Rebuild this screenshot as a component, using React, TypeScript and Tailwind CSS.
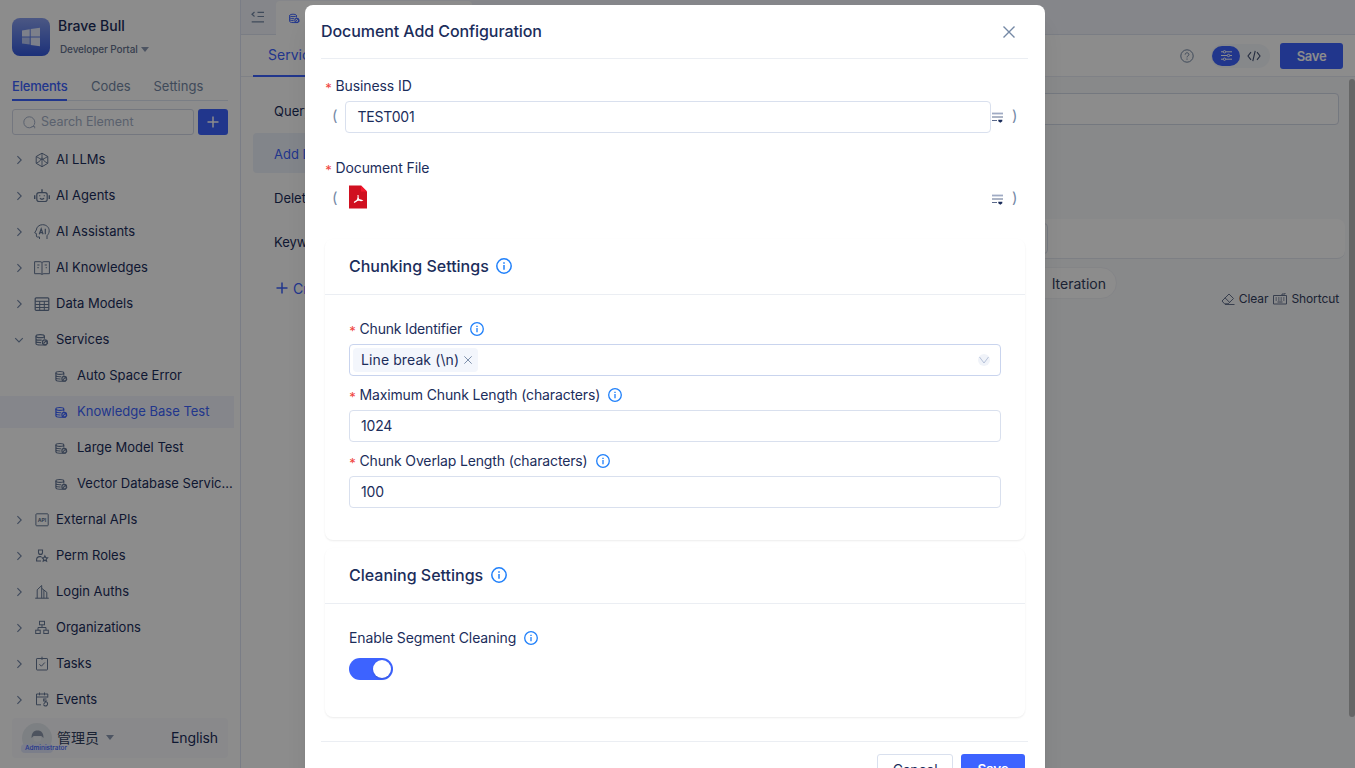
import React from "react";

type IconName =
  | "cube" | "robot" | "head" | "book" | "table" | "service" | "api"
  | "role" | "building" | "org" | "task" | "event";

const iconShapes: Record<IconName, React.ReactNode> = {
  cube: (
    <>
      <path d="M8 1.200l5.800 3.300v6.800L8 14.700l-5.800-3.400V4.500z" />
      <path d="M8 1.200v4.300M2.200 11.300L5.500 9.400M13.800 11.300l-3.300-1.900M2.200 4.500L8 7.800l5.800-3.300M8 7.800v6.900M8 5.500l-2.500 3.900M8 5.500l2.500 3.900" strokeWidth=".9" />
    </>
  ),
  robot: (
    <>
      <rect x="2.800" y="4.600" width="10.400" height="8.900" rx="2.200" strokeWidth="1.200" />
      <path d="M8 4.300V1.300M.7 7.200v3.800M15.300 7.200v3.800" strokeWidth="1.400" />
      <path d="M5.900 10.300c1.200 1.100 3 1.100 4.200 0M5.700 7.200v1.100M10.300 7.200v1.100" strokeWidth="1.200" />
    </>
  ),
  head: (
    <>
      <path d="M5.500 15v-2H3.200c-.7 0-.8-.5-.8-1V9.600L.7 8.800 2.300 6C2.600 3 5 .7 8.600.7c3.800 0 6.600 2.600 6.600 6.100 0 2.300-1 3.600-2.200 4.900V15" />
      <path d="M5.300 10.200L7.200 4.800l1.900 5.400M5.900 8.700h2.600M11.300 4.800v5.400" strokeWidth="1.200" />
    </>
  ),
  book: <path d="M8 2.600C7.500 2 6.800 1.700 6 1.700H.6v12H6c.8 0 1.500.2 2 .8.500-.6 1.200-.8 2-.8h5.400v-12H10c-.8 0-1.500.3-2 .9zM8 2.600v11.900M3.300 5h2.200M3.300 7.700h1.500M10.700 5h2.200M11.700 7.700h1.200" />,
  table: (
    <>
      <rect x="1.200" y="1.800" width="13.600" height="12.600" rx="1" strokeWidth="1.200" />
      <path d="M1.200 5.300h13.600M1.200 8.500h13.600M1.200 11.500h13.600M5.700 5.200v9.200M10.300 5.200v9.200" />
    </>
  ),
  service: (
    <>
      <ellipse cx="6.200" cy="4.200" rx="4.200" ry="1.500" strokeWidth="1.200" />
      <path d="M2 4.200v7.300c0 1 1.900 1.500 4.200 1.500h6.300M10.400 4.200v2.600M2 6.700c0 1 1.900 1.500 4.200 1.500h1.500M2 9.100c0 1 1.900 1.500 4.200 1.500h.8" strokeWidth="1.200" />
      <circle cx="10.900" cy="10.300" r="2.500" strokeWidth="1.300" />
      <path d="M9.500 11.500l2.600-2.600M12.300 8.300l1.400 3.500" strokeWidth="1.200" />
    </>
  ),
  api: <rect x="1.900" y="1.800" width="12.300" height="12" rx=".8" />,
  role: (
    <>
      <path d="M4.500 2h4v2.400a2 2 0 0 1-4 0zM7 13H2.600v-1.300c0-2 1.400-3.100 3.200-3.100h1.600" strokeWidth="1.100" />
      <path d="M10.900 7.900l.8 1.700 1.900.3-1.400 1.300.4 1.900-1.700-.9-1.700.9.4-1.900-1.400-1.300 1.900-.3z" strokeWidth="1.100" />
    </>
  ),
  building: <path d="M1.200 14.200h13.600M3.200 14.200V5.800l4.500-4.300v12.700M7.700 4.300l5.100 4v5.900M9.900 14.200V6.200" />,
  org: (
    <>
      <rect x="5.500" y="1.300" width="5" height="3.500" />
      <rect x="1.700" y="10.200" width="4.500" height="3.300" />
      <rect x="9.800" y="10.200" width="4.500" height="3.300" />
      <path d="M8 5v2.500M4 10.200V7.500h8v2.700" />
    </>
  ),
  task: (
    <>
      <rect x="2.500" y="2.500" width="11" height="11.500" rx=".6" />
      <path d="M8 .7v3.200M5.400 8.200l2 2 3.400-3.700" />
    </>
  ),
  event: (
    <>
      <path d="M7 12.800H2.500V2h11.300v3.500M2.500 5h11.300M5.500.5v2.800M10.500.5v2.800" />
      <path d="M12.500 7h-2.800v2h2.500L9.700 12M12.500 10a2.100 2.100 0 1 1-3 2.500" strokeWidth="1.100" />
    </>
  ),
};

function Icon({ name, className = "size-4" }: { name: IconName; className?: string }) {
  return (
    <svg viewBox="0 0 16 16" fill="none" stroke="currentColor" strokeWidth="1" className={`shrink-0 ${className}`}>
      {iconShapes[name]}
      {name === "api" && (
        <text x="8" y="9.600" textAnchor="middle" fontSize="5.200" fontWeight="700" fill="currentColor" stroke="none">API</text>
      )}
    </svg>
  );
}

function Chevron({ open = false }: { open?: boolean }) {
  return (
    <svg viewBox="0 0 10 10" fill="none" stroke="currentColor" strokeWidth="1.100" className="size-2.5 shrink-0 text-[#7387a8]">
      <path d={open ? "M1.200 3.200L5 7l3.800-3.800" : "M3.400 1.200L7.200 5 3.400 8.800"} />
    </svg>
  );
}

function Info({ large = false }: { large?: boolean }) {
  return (
    <svg viewBox="0 0 16 16" fill="none" stroke="#2080fa" className={large ? "size-4" : "size-3.5"}>
      <circle cx="8" cy="8" r="7.200" strokeWidth="1.500" />
      <path d="M8 6.900v4.900" strokeWidth="1.500" />
      <path d="M8 4.200v1.500" strokeWidth="1.600" />
    </svg>
  );
}

function Close({ className }: { className: string }) {
  return (
    <svg viewBox="0 0 12 12" fill="none" stroke="currentColor" strokeWidth="1.400" className={className}>
      <path d="M.5.5l11 11M11.500.5l-11 11" />
    </svg>
  );
}

function Plus() {
  return (
    <svg viewBox="0 0 12 12" stroke="currentColor" strokeWidth="1.500" className="size-3">
      <path d="M6 .5v11M.5 6h11" />
    </svg>
  );
}

const rows: { icon: IconName; label: string; open?: boolean; children?: { label: string; active?: boolean }[] }[] = [
  { icon: "cube", label: "AI LLMs" },
  { icon: "robot", label: "AI Agents" },
  { icon: "head", label: "AI Assistants" },
  { icon: "book", label: "AI Knowledges" },
  { icon: "table", label: "Data Models" },
  {
    icon: "service", label: "Services", open: true,
    children: [
      { label: "Auto Space Error" },
      { label: "Knowledge Base Test", active: true },
      { label: "Large Model Test" },
      { label: "Vector Database Servic..." },
    ],
  },
  { icon: "api", label: "External APIs" },
  { icon: "role", label: "Perm Roles" },
  { icon: "building", label: "Login Auths" },
  { icon: "org", label: "Organizations" },
  { icon: "task", label: "Tasks" },
  { icon: "event", label: "Events" },
];

function Sidebar() {
  return (
    <aside className="flex h-full w-[241px] shrink-0 flex-col border-r border-[#dfe4f4] bg-white">
      <div className="flex h-[74px] shrink-0 gap-2 pt-[18px] pl-3">
        <div className="flex size-[38px] items-center justify-center rounded-lg bg-linear-to-b from-[#8a9fef] to-[#3558dd]">
          <svg viewBox="0 0 20 20" className="size-5 text-[#e4eafc]" fill="currentColor">
            <path d="M1 3.400l7.700-1.200v7.200H1zM9.700 2L19 .7v8.700H9.700zM9.700 10.400H19v8.900L9.700 18z" />
            <path d="M1 10.400h7.700v7.200L1 16.400z" opacity=".7" />
          </svg>
        </div>
        <div className="-mt-0.5">
          <div className="h-5 text-[14px] leading-5 font-medium">Brave Bull</div>
          <div className="mt-[5px] flex items-center gap-[3px] pl-0.5 text-[10px] leading-4 font-medium text-[#66738f]">
            <span className="tracking-[-0.120px]">Developer Portal</span>
            <i className="border-x-4 border-t-[5px] border-x-transparent border-t-[#8d9ab3]" />
          </div>
        </div>
      </div>
      <div className="mx-3 flex h-[27px] shrink-0 gap-6 border-b border-[#dfe5f3] text-[13px] leading-6 text-[#7488a5]">
        <span className="h-[27px] w-[55px] border-b-2 border-[#3d63ff] font-medium tracking-[-0.200px] text-[#3d63ff]">Elements</span>
        <span className="w-[38.500px]">Codes</span>
        <span>Settings</span>
      </div>
      <div className="mt-2 flex h-[26px] shrink-0 gap-1 px-3">
        <div className="flex w-[182px] items-center rounded-[3px] border border-[#d3d9e8] pl-2.5 text-[12.500px] text-[#a5b1c8]">
          <svg viewBox="0 0 13 13" fill="none" stroke="currentColor" className="mr-[5px] size-[13px]">
            <circle cx="6.300" cy="6.300" r="5.500" />
            <path d="M8.500 10.500h3.200v1.800" />
          </svg>
          Search Element
        </div>
        <div className="flex w-[30px] items-center justify-center rounded-[3px] bg-[#3d63ff] text-white"><Plus /></div>
      </div>
      <nav className="mt-[7px] flex h-[576px] shrink-0 flex-col text-[13px]">
        {rows.map((r) => (
          <React.Fragment key={r.label}>
            <div className="flex h-9 shrink-0 items-center pl-3.5">
              <Chevron open={r.open} />
              <Icon name={r.icon} className="ml-2.5 size-4 text-[#667896]" />
              <span className="ml-1.5">{r.label}</span>
            </div>
            {r.children?.map((c) => (
              <div key={c.label} className={`my-0.5 mr-[6px] flex h-8 shrink-0 items-center pl-[54px] whitespace-nowrap ${c.active ? "bg-[#f2f5fd] text-[#3d63ff]" : ""}`}>
                <Icon name="service" className={`size-[15px] ${c.active ? "text-[#3d63ff]" : "text-[#667896]"}`} />
                <span className="ml-2">{c.label}</span>
              </div>
            ))}
          </React.Fragment>
        ))}
      </nav>
      <div className="mx-3 flex h-10 shrink-0 items-center rounded bg-[#f9fafd] px-2.5 pb-0.5 text-[14px]">
        <div className="relative mt-0.5 size-[30px] rounded-full bg-[#e4e9ee]">
          <svg viewBox="0 0 30 30" className="size-[30px]">
            <path d="M9.500 15c0-5 2-7.500 6-7.500s6 2.500 6 7.500l-2.200-2h-7.600z" fill="#8c98ac" />
            <path d="M11.500 13.500h7.500v3c0 3-7.500 3-7.500 0z" fill="#edf0f4" />
          </svg>
          <span className="absolute top-[21px] -left-px flex h-[9px] w-8 items-center rounded bg-[#e0e6fb] pl-1 text-[6.500px] font-medium whitespace-nowrap text-[#3d63ff]">Administrator</span>
        </div>
        <span className="ml-[5px] text-[#32405f]">管理员</span>
        <i className="ml-[7px] border-x-4 border-t-[5px] border-x-transparent border-t-[#8d9ab3]" />
        <span className="ml-auto tracking-[-0.100px]">English</span>
      </div>
    </aside>
  );
}

function Workspace() {
  return (
    <main className="flex min-w-0 flex-1 flex-col bg-white">
      <div className="flex h-[35px] shrink-0 border-b border-[#dfe4f0] bg-[#f2f4fb]">
        <div className="flex w-[35px] items-center pl-2.5">
          <svg viewBox="0 0 13 12" fill="none" stroke="#7488a5" strokeWidth="1.200" className="h-3 w-[13px]">
            <path d="M3.500 1L1 3.200l2.500 2.300M6.500 1.300h6.500M6.500 5.500h6.500M.7 10.800h12.300" />
          </svg>
        </div>
        <div className="mt-px flex h-[34px] w-[196px] items-center rounded-t bg-white pl-3">
          <Icon name="service" className="size-[13px] text-[#3d63ff]" />
        </div>
      </div>
      <div className="flex h-[42px] shrink-0 items-center justify-end border-b border-[#e8ecf4] pr-3">
        <div className="mr-auto ml-3 h-[42px] w-[90px] border-b-2 border-[#3d63ff] pl-[15px] text-[14px] leading-10 text-[#3d63ff]">Service</div>
        <svg viewBox="0 0 14 14" fill="none" stroke="#7488a5" className="size-3.5">
          <circle cx="7" cy="7" r="6.200" />
          <path d="M5.200 5.600c0-2.500 3.700-2.300 3.700 0 0 1.300-1.900 1.200-1.900 2.800M7 9.500v1.200" />
        </svg>
        <div className="ml-[17px] flex h-6 w-[59px] items-center rounded-full bg-[#f5f7fc] pl-px">
          <div className="flex h-5 w-7 items-center justify-center rounded-full bg-[#3d63ff]">
            <svg viewBox="0 0 11 11" fill="none" stroke="white" className="size-[11px]">
              <path d="M0 1.800h2M5 1.800h6M0 5.500h6M9 5.500h2M0 9.200h2M5 9.200h6" />
              <circle cx="3.500" cy="1.800" r="1.200" /><circle cx="7.500" cy="5.500" r="1.200" /><circle cx="3.500" cy="9.200" r="1.200" />
            </svg>
          </div>
          <svg viewBox="0 0 14 12" fill="none" stroke="#425273" strokeWidth="1.100" className="ml-[7px] h-3 w-3.5">
            <path d="M4 2.200L1 6l3 3.800M10 2.200L13 6l-3 3.800M8.200.8L5.800 11.200" />
          </svg>
        </div>
        <div className="ml-2.5 h-[26px] w-[63px] rounded-[3px] bg-[#3d63ff] text-center text-[13px] leading-[27px] font-semibold tracking-[-0.300px] text-white">Save</div>
      </div>
      <div className="flex min-h-0 flex-1">
        <div className="w-[300px] shrink-0 pt-[11px] pl-3 text-[13px]">
          <div className="flex h-11 items-center pt-1 pl-[21px]">Query</div>
          <div className="mt-px mb-[3px] flex h-10 items-center rounded bg-[#edf2fb] pt-1 pl-[21px] text-[#3d63ff]">Add Doc</div>
          <div className="flex h-11 items-center pt-0.5 pl-[21px]">Delete</div>
          <div className="flex h-11 items-center pt-0.5 pl-[21px]">Keywd</div>
          <div className="flex h-12 items-center gap-[5px] pl-[23px] text-[14px] text-[#3d63ff]"><Plus />Create</div>
        </div>
        <div className="min-w-0 flex-1 bg-[#f8f9fc] pt-4 pl-3">
          <div className="mr-[10px] h-8 rounded border border-[#d3dae8] bg-white" />
          <div className="mt-[94px] mr-1 h-10 rounded-lg border-b border-[#e3e8f0] bg-white pt-1">
            <div className="h-[31px] w-[495px] rounded border border-[#d9e0ec]" />
          </div>
          <div className="mt-2 flex">
            <div className="flex h-8 w-[564px] items-center justify-end rounded-full border border-[#f0f2f6] bg-white pr-2.5 text-[14px] text-[#34405e]">Iteration</div>
          </div>
          <div className="-mt-2 mr-2.5 flex h-4 items-center justify-end text-[12px] text-[#34405e]">
            <svg viewBox="0 0 14 12" fill="none" stroke="#66748f" className="mr-1 h-3 w-3.5"><path d="M1 8l7-7 4.500 4.500-5.300 5.300H3.500zM4 4.800l4.500 4.500M4 11.500h9.500" /></svg>
            <span className="tracking-[-0.100px]">Clear</span>
            <svg viewBox="0 0 14 12" fill="none" stroke="#66748f" className="mr-1 ml-[5px] h-3 w-3.5"><path d="M.5 2.500h13v8.500H.5zM9 2.500V1h3V0M4.500 9h5" /><path d="M2.500 5h9M2.500 7h9" strokeDasharray="1.500 1" /></svg>
            <span className="tracking-[-0.100px]">Shortcut</span>
          </div>
        </div>
        <div className="w-1.5 shrink-0 bg-[#f8f9fc] pt-0.5"><div className="h-[638px] rounded-full bg-[#b9babb]" /></div>
      </div>
    </main>
  );
}

function Label({ children, tracking = "tracking-[-0.100px]", info = false, required = true }: { children: string; tracking?: string; info?: boolean; required?: boolean }) {
  return (
    <div className="flex h-[22px] items-center text-[14px] leading-[22px]">
      {required && <span className="mr-[3.500px] w-[7px] pt-[3px] text-center text-[13px] text-[#f0433d]">*</span>}
      <span className={`mr-2 ${tracking}`}>{children}</span>
      {info && <Info />}
    </div>
  );
}

function ModeIcon() {
  return (
    <svg viewBox="0 0 11 11" className="ml-px h-[11px] w-[11px] shrink-0">
      <path d="M0 1.500h11" stroke="#a0abc4" strokeWidth="1.800" />
      <path d="M0 5h11M0 8.500h5" stroke="#5b6a8c" strokeWidth="1" />
      <path d="M6.300 7.800h4v1.400L8.300 10.800l-2-1.600z" fill="#1b2d5b" />
    </svg>
  );
}

function ParamRow({ children }: { children: React.ReactNode }) {
  return (
    <div className="flex h-8 items-center pl-[7px] text-[15px] text-[#7488a5]">
      <span className="w-[13px] shrink-0 pb-px">(</span>
      {children}
      <ModeIcon />
      <span className="w-[14px] shrink-0 pb-px pl-[9px]">)</span>
    </div>
  );
}

function Dialog() {
  return (
    <section className="mt-[5px] h-[820px] w-[740px] rounded-t-lg bg-white pr-[17px] pl-4 shadow-xl">
      <header className="flex h-[54px] items-center justify-between border-b border-[#ebeef3] pr-[13px]">
        <h1 className="-mt-px text-[16px] font-medium tracking-[-0.080px]">Document Add Configuration</h1>
        <Close className="size-3 text-[#7488a5]" />
      </header>
      <div className="h-[682px] px-1 pt-4">
        <Label>Business ID</Label>
        <div className="mt-1">
          <ParamRow>
            <div className="flex h-8 w-[646px] shrink-0 items-center rounded border border-[#d9e0ee] pb-px pl-[11.500px] text-[14px] tracking-[-0.200px] text-[#1b2d5b]">TEST001</div>
          </ParamRow>
        </div>
        <div className="mt-6"><Label>Document File</Label></div>
        <div className="mt-1">
          <ParamRow>
            <div className="flex w-[646px] shrink-0 pb-1 pl-1">
              <svg viewBox="0 0 18 24" className="h-6 w-[18px]">
                <path d="M0 .5h12l6 6v17H0z" fill="#d01020" />
                <path d="M12 .5l6 6h-6z" fill="#f4182d" />
                <path d="M5 17.500c4-1.500 4.500-5 4-7.500M9 12c.5 3 2 4 4 3.500-2-1.200-5-.3-7.500 1.500" fill="none" stroke="white" strokeWidth="1.100" />
              </svg>
            </div>
          </ParamRow>
        </div>
        <div className="mt-6 h-[301px] w-[700px] rounded-lg shadow-[0_1px_2px_rgba(0,0,0,0.08)]">
          <h2 className="flex h-[56px] items-center gap-[7px] border-b border-[#ebeef3] pb-px pl-6 text-[16px] font-medium">Chunking Settings<Info large /></h2>
          <div className="px-6 pt-[23px]">
            <Label info tracking="tracking-[-0.180px]">Chunk Identifier</Label>
            <div className="mt-1 flex h-8 w-[652px] items-center justify-between rounded border border-[#c9d4ee] pr-2.5 pl-[3px]">
              <span className="flex h-6 w-[125px] items-center justify-between rounded bg-[#f3f6fc] pr-1.5 pl-2 text-[14px] tracking-[0.100px]"><span className="pb-px">Line break (\n)</span><Close className="size-2 text-[#7488a5]" /></span>
              <svg viewBox="0 0 12 12" fill="none" stroke="#b5c1d8" className="size-3 rounded-full bg-[#f0f3f9]"><path d="M1.500 3L6 9l4.500-6" /></svg>
            </div>
            <div className="mt-2"><Label info tracking="tracking-[-0.140px]">Maximum Chunk Length (characters)</Label></div>
            <div className="mt-1 flex h-8 w-[652px] items-center rounded border border-[#d9e0ee] pb-px pl-[11px] text-[14px] tracking-[-0.200px]">1024</div>
            <div className="mt-2"><Label info tracking="tracking-[-0.140px]">Chunk Overlap Length (characters)</Label></div>
            <div className="mt-1 flex h-8 w-[652px] items-center rounded border border-[#d9e0ee] pb-px pl-[11px] text-[14px] tracking-[-0.200px]">100</div>
          </div>
        </div>
        <div className="mt-2 h-[169px] w-[700px] rounded-lg shadow-[0_1px_2px_rgba(0,0,0,0.08)]">
          <h2 className="flex h-[56px] items-center gap-2 border-b border-[#ebeef3] pb-px pl-6 text-[16px] font-medium">Cleaning Settings<Info large /></h2>
          <div className="px-6 pt-[23px]">
            <Label required={false} info tracking="tracking-[-0.120px]">Enable Segment Cleaning</Label>
            <div className="mt-[9px] flex h-[22px] w-11 justify-end rounded-full bg-[#3d63ff] p-0.5"><div className="size-[18px] rounded-full bg-white shadow-sm" /></div>
          </div>
        </div>
      </div>
      <footer className="flex justify-end gap-2 border-t border-[#ebeef3] pt-3 pr-[3px] text-[14px]">
        <button className="h-8 w-[76px] rounded-[3px] border border-[#d9e0ee] pb-0.5 tracking-[-0.200px]">Cancel</button>
        <button className="h-8 w-16 rounded-[3px] bg-[#3d63ff] pb-0.5 text-[13.500px] font-semibold tracking-[-0.200px] text-white">Save</button>
      </footer>
    </section>
  );
}

export default function App() {
  return (
    <div className="relative flex h-screen w-full overflow-hidden font-['Inter','Noto_Sans_CJK_SC',sans-serif] text-[#1b2d5b]">
      <Sidebar />
      <Workspace />
      <div className="absolute inset-0 flex justify-center overflow-hidden bg-black/45 pr-[5px]">
        <Dialog />
      </div>
    </div>
  );
}
